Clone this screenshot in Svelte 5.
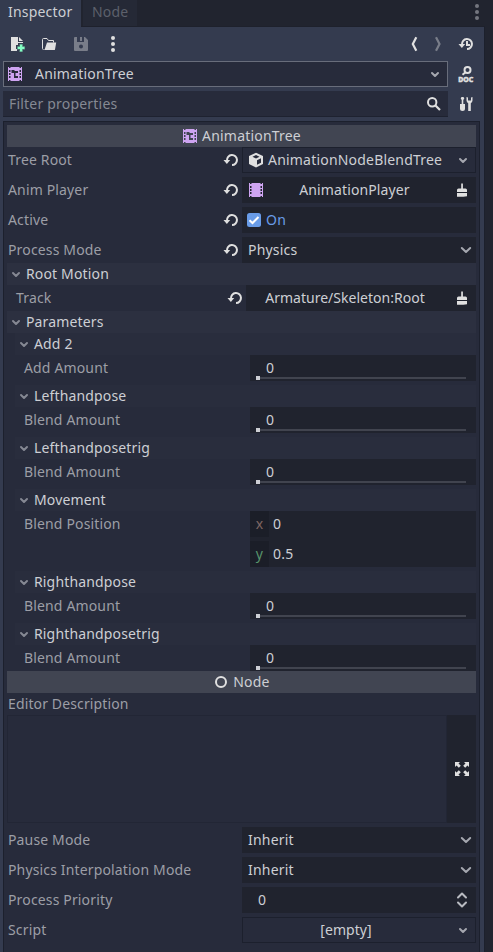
<script>
  const sections = [
    { title: 'Add 2', label: 'Add Amount', kind: 'slider' },
    { title: 'Lefthandpose', label: 'Blend Amount', kind: 'slider' },
    { title: 'Lefthandposetrig', label: 'Blend Amount', kind: 'slider' },
    { title: 'Movement', label: 'Blend Position', kind: 'vector' },
    { title: 'Righthandpose', label: 'Blend Amount', kind: 'slider' },
    { title: 'Righthandposetrig', label: 'Blend Amount', kind: 'slider' }
  ];
</script>

{#snippet tree()}
  <svg class="icon" viewBox="0 0 16 16"><path fill="#cea4f1" fill-rule="evenodd" d="M1 1h1v1h1.500V1h9v1H14V1h1v14h-1v-1h-1.500v1h-9v-1H2v1H1zM2 4v2h1.500V4zM2 7v2h1.500V7zM2 10v2h1.500v-2zM12.500 4v2H14V4zM12.500 7v2H14V7zM12.500 10v2H14v-2zM4.500 4H7.500v1H11v2H8.500v3H11v2H7V7H4.500z"/></svg>
{/snippet}
{#snippet film()}
  <svg class="icon" viewBox="0 0 16 16"><path fill="#cea4f1" fill-rule="evenodd" d="M1 1h1v1h1.500V1h9v1H14V1h1v14h-1v-1h-1.500v1h-9v-1H2v1H1zM2 4v2h1.500V4zM2 7v2h1.500V7zM2 10v2h1.500v-2zM12.500 4v2H14V4zM12.500 7v2H14V7zM12.500 10v2H14v-2z"/></svg>
{/snippet}
{#snippet reload()}
  <svg class="icon" viewBox="0 0 16 16"><path fill="none" stroke="#e0e0e0" stroke-width="2" d="M4 8.500A5 5 0 1 1 9 13"/><path fill="#e0e0e0" d="M0.500 8h6.700L3.850 12z"/></svg>
{/snippet}
{#snippet chevron()}
  <svg class="chev" viewBox="0 0 12 12"><path fill="none" stroke="currentColor" stroke-width="2" stroke-linecap="round" stroke-linejoin="round" d="M1.8 4 6 8l4.2-4"/></svg>
{/snippet}
{#snippet small()}
  <svg class="chev" viewBox="0 0 12 12"><path fill="none" stroke="currentColor" stroke-width="2" stroke-linecap="round" stroke-linejoin="round" d="M3 5l3 3 3-3"/></svg>
{/snippet}
{#snippet clear()}
  <svg class="icon" viewBox="0 0 16 16"><path fill="#e0e0e0" d="M7.200 1.500h1.700v5h2.600q1.500 0 1.500 1.500v2H3V8q0-1.500 1.500-1.500h2.700zM3 11h10v3.200q-5 .8-10 .5z"/></svg>
{/snippet}
{#snippet slider()}
  <div class="field slider"><span>0</span><div class="track"><i></i></div></div>
{/snippet}

<div class="dock">
  <div class="tabs">
    <div class="tab active">Inspector</div>
    <div class="tab other">Node</div>
    <svg class="icon more" viewBox="0 0 16 16" fill="#74767f"><circle cx="8" cy="2" r="2"/><circle cx="8" cy="8" r="2"/><circle cx="8" cy="14" r="2"/></svg>
  </div>
  <div class="body">
    <div class="tools">
      <svg class="icon" viewBox="0 0 16 16"><path fill="#e0e0e0" d="M2 1v14h6v-2H7v-4h2V7h5V6H9V1zm8 0v4h4z"/><path fill="#84ffc4" d="M10 8h4v2h2v4h-2v2h-4v-2H8v-4h2z" opacity=".25"/><path fill="#84ffc4" d="M11 8.500h2.300v2.200H15.500v2.300h-2.200V15.500H11v-2.500H8.700v-2.300H11z"/></svg>
      <svg class="icon" viewBox="0 0 16 16"><path fill="none" stroke="#e0e0e0" stroke-linejoin="round" d="M2.500 13.500a1 1 0 0 1-1-1v-9a1 1 0 0 1 1-1h3.500l1.500 2h5v2"/><path fill="#e0e0e0" d="M6 6.500h9.200L14 13.500q-.1.500-.8.500H2.500q1 0 1.300-1z"/></svg>
      <svg class="icon dim" viewBox="0 0 16 16"><path fill="#e0e0e0" fill-rule="evenodd" d="M2 1a1 1 0 0 0-1 1v12a1 1 0 0 0 1 1h12a1 1 0 0 0 1-1V4l-3-3h-1v5H4V1zm5 0v4h2V1zM8 8.500a2 2 0 1 1 0 4 2 2 0 0 1 0-4z"/></svg>
      <svg class="icon" viewBox="0 0 16 16" fill="#e0e0e0"><circle cx="8" cy="2" r="2"/><circle cx="8" cy="8" r="2"/><circle cx="8" cy="14" r="2"/></svg>
      <svg class="icon back" viewBox="0 0 16 16"><path fill="none" stroke="#e0e0e0" stroke-width="2.200" d="M10.300 1.300 6.800 8l3.500 6.700"/></svg>
      <svg class="icon fwd dim" viewBox="0 0 16 16"><path fill="none" stroke="#e0e0e0" stroke-width="2.200" d="M6 1.300 9.500 8 6 14.700"/></svg>
      <svg class="icon hist" viewBox="0 0 16 16"><path fill="none" stroke="#e0e0e0" stroke-width="2" d="M4 8.500A5 5 0 1 1 9 13M9 5v4h3"/><path fill="#e0e0e0" d="M0.500 8h6.700L3.850 12z"/></svg>
    </div>
    <div class="bar">
      <div class="select object">{@render tree()}<span class="grow">AnimationTree</span>{@render small()}</div>
      <svg class="icon over" viewBox="0 0 16 16"><circle cx="9.500" cy="4" r="3" fill="none" stroke="#e0e0e0" stroke-width="2"/><path d="M7.500 6.200 4.500 8.800" stroke="#e0e0e0" stroke-width="2"/><text class="doc" x="0.300" y="15.700" textLength="15" lengthAdjust="spacingAndGlyphs">DOC</text></svg>
    </div>
    <div class="bar filter">
      <div class="search"><span class="grow">Filter properties</span>
        <svg class="icon" viewBox="0 0 16 16"><circle cx="6.200" cy="6.200" r="4.200" fill="none" stroke="#e0e0e0" stroke-width="2"/><path d="m9.200 9.200 4.800 4.800" stroke="#e0e0e0" stroke-width="2.200"/></svg></div>
      <svg class="icon" viewBox="0 0 16 16" fill="#e0e0e0"><path d="M3.500 1h2l.8 1.500L5.300 4v4H7v4.500a2.500 2.500 0 0 1-5 0V8h1.700V4l-1-1.500zM8.500 1v3.500q0 1.800 1.700 2.700V15h2.600V7.200q1.700-.9 1.700-2.700V1l-1.500.5v3h-3v-3z"/></svg>
    </div>

    <div class="panel">
      <div class="category">{@render tree()}<span>AnimationTree</span></div>
      <div class="row"><span class="label">Tree Root</span>{@render reload()}
        <div class="field outlined res"><svg class="icon" viewBox="0 0 16 16"><path fill="#e0e0e0" fill-rule="evenodd" d="M8 .800 15 4v8l-7 3.500L1 12V4zM8 3 4.500 4.700 8 6.400l3.500-1.700zM9 8.200v4.600l4-2V6.200z"/></svg><span class="grow">AnimationNodeBlendTree</span>{@render small()}</div>
      </div>
      <div class="row"><span class="label">Anim Player</span>{@render reload()}
        <div class="field node">{@render film()}<span class="grow center">AnimationPlayer</span>{@render clear()}</div>
      </div>
      <div class="row"><span class="label">Active</span>{@render reload()}
        <div class="field check"><svg class="icon" viewBox="0 0 16 16"><rect x="1" y="1" width="14" height="14" rx="2.500" fill="#699ce8"/><path fill="none" stroke="#fff" stroke-width="2" d="m3.500 8.300 3 2.700 6-6"/></svg><span>On</span></div>
      </div>
      <div class="row tight"><span class="label">Process Mode</span>{@render reload()}
        <div class="field option"><span class="grow">Physics</span>{@render chevron()}</div>
      </div>

      <div class="group">{@render small()}<span>Root Motion</span></div>
      <div class="row tight track-row"><span class="label">Track</span>{@render reload()}
        <div class="field path"><span class="grow center">Armature/Skeleton:Root</span>{@render clear()}</div>
      </div>

      <div class="group">{@render small()}<span>Parameters</span></div>
      <div class="params">
        {#each sections as s}
          <div class="sub">
            <div class="group inner">{@render small()}<span>{s.title}</span></div>
            <div class="pair">
              <span class="label">{s.label}</span>
              {#if s.kind === 'slider'}
                {@render slider()}
              {:else}
                <div class="vector">
                  <div class="axis"><b class="x">x</b><span>0</span></div>
                  <div class="axis"><b class="y">y</b><span>0.5</span></div>
                </div>
              {/if}
            </div>
          </div>
        {/each}
      </div>

      <div class="category nodecat"><svg class="icon" viewBox="0 0 16 16"><circle cx="8" cy="8" r="5" fill="none" stroke="#e0e0e0" stroke-width="2"/></svg><span>Node</span></div>
      <div class="desc">Editor Description</div>
      <div class="editor">
        <div class="text"></div>
        <div class="expand"><svg class="icon" viewBox="0 0 16 16"><path fill="#e0e0e0" d="M1 1h5L4.500 2.500l2.300 2.300-2 2L2.500 4.500 1 6zM15 1v5l-1.500-1.500-2.300 2.300-2-2 2.300-2.300L10 1zM1 15v-5l1.500 1.500 2.300-2.300 2 2-2.300 2.300L6 15zM15 15h-5l1.500-1.500-2.300-2.300 2-2 2.300 2.300L15 10z"/></svg></div>
      </div>
      <div class="row"><span class="label">Pause Mode</span><div class="field option"><span class="grow">Inherit</span>{@render chevron()}</div></div>
      <div class="row"><span class="label">Physics Interpolation Mode</span><div class="field option"><span class="grow">Inherit</span>{@render chevron()}</div></div>
      <div class="row"><span class="label">Process Priority</span><div class="field spin"><span class="grow">0</span>
        <svg class="icon" viewBox="0 0 16 16"><path fill="none" stroke="#b9bbc1" stroke-width="2" stroke-linecap="round" stroke-linejoin="round" d="m4 5.500 4-4 4 4M4 10.500l4 4 4-4"/></svg></div></div>
      <div class="row"><span class="label">Script</span><div class="field outlined script"><span class="grow center">[empty]</span>{@render small()}</div></div>
    </div>
  </div>
</div>

<style>
  :global(body) { background: #21242f; }
  .dock { box-sizing: border-box; height: 952px; width: 493px; overflow: hidden; display: flex; flex-direction: column; background: #21242f; color: #cdcfd4; font: 14px/22px "Noto Sans", sans-serif; letter-spacing: 0.2px; white-space: nowrap; }
  svg { display: block; flex: none; }
  .icon { width: 16px; height: 16px; }
  .over { overflow: visible; }
  .doc { font: 800 7.5px "Noto Sans", sans-serif; letter-spacing: 0; fill: #e0e0e0; stroke: #e0e0e0; stroke-width: .5px; }
  .dim { opacity: .4; }
  .chev { width: 12px; height: 12px; color: #a5a7af; }
  .grow { flex: 1; }
  .center { text-align: center; letter-spacing: 0.12px; }
  .tabs { height: 26px; flex: none; display: flex; align-items: stretch; line-height: 24px; }
  .tab { box-sizing: border-box; }
  .active { width: 81px; padding-left: 8px; background: #343b4f; height: 27px; position: relative; z-index: 1; }
  .other { width: 54px; margin-left: 2px; padding-left: 9px; background: #252936; color: #5c606b; }
  .more { margin: 4px 8px 0 auto; }
  .body { box-sizing: border-box; width: 485px; flex: 1; background: #343b4f; border-top: 1px solid #1e212c; border-right: 1px solid #1c202c; padding: 0 4px 0 3px; display: flex; flex-direction: column; min-height: 0; }
  .tools { display: flex; gap: 16px; height: 34px; align-items: center; padding-left: 6px; }
  .back { margin-left: auto; }
  .fwd { margin-left: -8px; }
  .hist { margin-right: 6px; margin-left: -4px; }
  .bar { display: flex; align-items: center; justify-content: space-between; height: 26px; padding-right: 6px; }
  .filter { margin-top: 4px; }
  .select, .search { box-sizing: border-box; width: 445px; height: 26px; display: flex; align-items: center; background: #272b3b; }
  .select { border: 1px solid #686d7b; padding: 0 6px 0 3px; gap: 12px; }
  .search { padding: 0 6px; color: #858993; border-bottom: 1px solid #1e2230; }
  .panel { box-sizing: border-box; width: 477px; flex: 1; margin-top: 4px; background: #272b3b; border: 1px solid #1c202d; border-bottom: 0; padding: 3px; display: flex; flex-direction: column; }
  .category { width: 469px; height: 22px; background: #414552; display: flex; align-items: center; justify-content: center; gap: 4px; flex: none; }
  .row { display: flex; height: 26px; flex: none; width: 469px; align-items: center; margin-bottom: 4px; justify-content: flex-end; }
  .tight { margin-bottom: 0; }
  .label { flex: 1; color: #9c9ea6; padding-left: 1px; letter-spacing: 0.15px; }
  .row > svg { margin-right: 3px; }
  .field { box-sizing: border-box; width: 234px; height: 26px; display: flex; align-items: center; background: #20232e; }
  .outlined { background: #272b3b; border: 1px solid #1c202d; }
  .res { padding: 0 6px 0 5px; gap: 4px; }
  .node { padding: 0 6px; }
  .node .center { padding-right: 9px; }
  .check { padding-left: 4px; gap: 4px; color: #699ce8; }
  .option { padding: 0 4px 0 6px; }
  .group { height: 22px; flex: none; display: flex; align-items: center; gap: 4px; padding-left: 3px; background: #2c3040; width: 466px; letter-spacing: 0.15px; }
  .group .chev { color: #858893; }
  .track-row .label { padding-left: 9px; }
  .path { width: 230px; padding: 0 6px 0 0; }
  .path .center { padding-right: 10px; letter-spacing: 0.02px; }
  .sub { margin-bottom: 4px; }
  .sub:last-child { margin-bottom: 0; }
  .inner { margin-left: 8px; width: 458px; background: #292d3d; }
  .pair { display: flex; width: 469px; justify-content: space-between; }
  .pair .label { padding-left: 17px; line-height: 26px; }
  .pair .slider { width: 226px; flex-direction: column; align-items: stretch; padding: 2px 10px 0 6px; }
  .slider span { padding-left: 10px; height: 19px; line-height: 22px; }
  .track { height: 4px; margin-top: 0; background: linear-gradient(#41444f, #41444f) 0 1px / 100% 2px no-repeat; }
  .track i { display: block; width: 4px; height: 4px; background: #cdcfd4; }
  .vector { width: 226px; display: flex; flex-direction: column; background: #20232e; gap: 4px; }
  .axis { display: flex; height: 26px; align-items: center; }
  .axis b { font-weight: 400; width: 19px; height: 26px; line-height: 26px; text-align: center; background: #1b1e28; margin-right: 4px; }
  .axis .x { color: #7f6662; }
  .axis .y { color: #58936b; }
  .desc { height: 22px; flex: none; color: #9c9ea6; padding-left: 1px; letter-spacing: 0.13px; }
  .editor { display: flex; height: 108px; width: 469px; flex: none; margin-bottom: 4px; }
  .text { box-sizing: border-box; width: 440px; border: 1px solid #222635; }
  .expand { flex: 1; display: flex; align-items: center; justify-content: center; background: #20232e; }
  .spin { padding: 0 6px 0 16px; }
  .script { padding: 0 6px 0 0; }
  .script .center { padding-right: 8px; letter-spacing: 0.05px; }
</style>
